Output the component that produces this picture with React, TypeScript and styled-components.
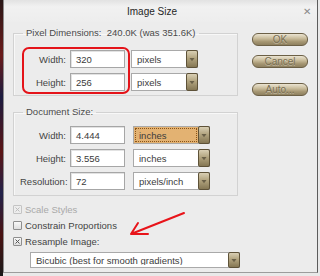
import { Fragment } from 'react';
import styled, { createGlobalStyle } from 'styled-components';

const GlobalStyle = createGlobalStyle`
  html, body {
    margin: 0;
    padding: 0;
    background: #e4e4e4;
  }
  * {
    box-sizing: border-box;
  }
`;

const Screen = styled.div({
  position: 'relative',
  display: 'flex',
  width: 320,
  height: 276,
  overflow: 'hidden',
  background: '#e9e9e9',
  fontFamily: '"Liberation Sans", Arial, sans-serif',
  fontSize: 9.5,
  color: '#444',
});

const Backdrop = styled.div({
  width: 3,
  flexShrink: 0,
  background:
    'linear-gradient(180deg, #2a1818 0%, #6a1a1a 20%, #1c1c40 35%, #5a1414 55%, #22224a 70%, #4a1212 85%, #1a1a1a 100%)',
});

const Window = styled.div({
  display: 'flex',
  flexDirection: 'column',
  width: 315,
  height: 273,
  flexShrink: 0,
  borderLeft: '1px solid #8c8c8c',
  borderRight: '1px solid #5c5c5c',
  borderBottom: '1px solid #9c9c9c',
  background: '#ececec',
});

const TitleBar = styled.div({
  display: 'flex',
  alignItems: 'center',
  justifyContent: 'space-between',
  height: 22,
  paddingLeft: 123,
  paddingRight: 6,
  background: 'linear-gradient(180deg, #e2e2e2 0%, #f1f1f1 30%, #ededed 100%)',
});

const Title = styled.span({
  fontSize: 10,
  color: '#262626',
});

const CloseGlyph = styled.span({
  fontSize: 10,
  color: '#8a8a8a',
});

const Body = styled.div({
  display: 'flex',
  gap: 14,
  padding: '0 9px',
});

const LeftColumn = styled.div({
  display: 'flex',
  flexDirection: 'column',
  width: 225,
});

const RightColumn = styled.div({
  display: 'flex',
  flexDirection: 'column',
  width: 56,
  paddingTop: 11,
});

const Group = styled.fieldset<{ $top: number; $padBottom: number }>((props) => ({
  margin: `${props.$top}px 0 0 0`,
  padding: `8px 0 ${props.$padBottom}px 0`,
  minWidth: 0,
  border: '1px solid #d2d2d2',
  boxShadow: 'inset 1px 1px 0 #f8f8f8',
}));

const GroupTitle = styled.legend({
  marginLeft: 9,
  padding: '0 3px',
  lineHeight: '12px',
  fontSize: 9.5,
  color: '#4a4a4a',
});

const PixelRow = styled.div({
  display: 'flex',
  alignItems: 'flex-start',
  paddingLeft: 8,
});

const Highlight = styled.div({
  display: 'flex',
  flexDirection: 'column',
  gap: 5,
  width: 108,
  padding: '1px 3px 1px 0',
  border: '2px solid #e4141a',
  borderRadius: 7,
});

const FieldLine = styled.div({
  display: 'flex',
  alignItems: 'center',
  gap: 4,
  height: 18,
});

const UnitStack = styled.div({
  display: 'flex',
  flexDirection: 'column',
  gap: 5,
  marginTop: 3,
  marginLeft: 1,
});

const DocGrid = styled.div({
  display: 'grid',
  gridTemplateColumns: '46px 55px 77px',
  gridAutoRows: 18,
  columnGap: 4,
  rowGap: 5,
  paddingLeft: 6,
  alignItems: 'center',
  '& > :nth-child(3n)': {
    marginLeft: 4,
  },
});

const FieldLabel = styled.span<{ $width?: number }>((props) => ({
  width: props.$width,
  textAlign: 'right',
  whiteSpace: 'nowrap',
  color: '#444',
}));

const TextBox = styled.div({
  display: 'flex',
  alignItems: 'center',
  width: 55,
  height: 18,
  paddingLeft: 5,
  background: '#fff',
  border: '1px solid #a6a6a6',
  boxShadow: 'inset 1px 1px 0 #e2e2e2',
  color: '#3a3a3a',
});

const SelectBox = styled.div<{ $width: number; $height?: number; $focused?: boolean }>((props) => ({
  display: 'flex',
  alignItems: 'stretch',
  width: props.$width,
  height: props.$height ?? 18,
  background: props.$focused ? '#e3b272' : '#fff',
  border: '1px solid #a9a9a9',
  color: '#3c3c3c',
}));

const SelectText = styled.span<{ $focused?: boolean }>((props) => ({
  display: 'flex',
  alignItems: 'center',
  flex: 1,
  paddingLeft: 3,
  margin: 1,
  border: props.$focused ? '1px dotted #8a5418' : '1px solid transparent',
  whiteSpace: 'nowrap',
  overflow: 'hidden',
}));

const DropButton = styled.span({
  display: 'flex',
  alignItems: 'center',
  justifyContent: 'center',
  width: 12,
  margin: '-1px -1px -1px 0',
  borderRadius: 2,
  border: '1px solid #5e5238',
  background: 'linear-gradient(180deg, #d9cfb4 0%, #b2a47f 45%, #857754 100%)',
});

const DialogButton = styled.div<{ $gap: number }>((props) => ({
  display: 'flex',
  alignItems: 'center',
  justifyContent: 'center',
  height: 13,
  marginTop: props.$gap,
  borderRadius: 6,
  border: '1px solid #6c6046',
  background: 'linear-gradient(180deg, #ebe4d2 0%, #c9bc9b 40%, #a59672 70%, #8e8060 100%)',
  fontSize: 10,
  color: '#786d52',
  textShadow: '0 1px 0 rgba(255,255,255,0.35)',
}));

const Options = styled.div({
  display: 'flex',
  flexDirection: 'column',
  marginTop: 5,
});

const OptionRow = styled.div<{ $disabled?: boolean }>((props) => ({
  display: 'flex',
  alignItems: 'center',
  gap: 3,
  height: 16,
  color: props.$disabled ? '#a9a9a9' : '#444',
}));

const Box = styled.span<{ $disabled?: boolean }>((props) => ({
  display: 'flex',
  alignItems: 'center',
  justifyContent: 'center',
  width: 9,
  height: 9,
  border: `1px solid ${props.$disabled ? '#c4c4c4' : '#8e8e8e'}`,
  borderRadius: 1,
  background: props.$disabled ? '#ededed' : 'linear-gradient(180deg, #f8f8f8, #dedede)',
}));

const ResampleSelect = styled.div({
  marginTop: 3,
  marginLeft: 17,
});

const Arrow = styled.svg({
  position: 'absolute',
  left: 128,
  top: 210,
  pointerEvents: 'none',
});

function Caret() {
  return (
    <svg width="6" height="5" viewBox="0 0 6 5">
      <polygon points="0.5,1 5.5,1 3,4.2" fill="#6a6048" />
    </svg>
  );
}

interface SelectProps {
  value: string;
  width: number;
  height?: number;
  focused?: boolean;
}

function Select({ value, width, height, focused }: SelectProps) {
  return (
    <SelectBox $width={width} $height={height} $focused={focused}>
      <SelectText $focused={focused}>{value}</SelectText>
      <DropButton>
        <Caret />
      </DropButton>
    </SelectBox>
  );
}

interface CheckProps {
  label: string;
  checked?: boolean;
  disabled?: boolean;
}

function Check({ label, checked, disabled }: CheckProps) {
  return (
    <OptionRow $disabled={disabled}>
      <Box $disabled={disabled}>
        {checked && (
          <svg width="5" height="5" viewBox="0 0 5 5">
            <path d="M0.5 0.5 L4.5 4.5 M4.5 0.5 L0.5 4.5" stroke={disabled ? '#bdbdbd' : '#555'} strokeWidth="1" />
          </svg>
        )}
      </Box>
      <span>{label}</span>
    </OptionRow>
  );
}

const docRows = [
  { label: 'Width:', value: '4.444', unit: 'inches', focused: true },
  { label: 'Height:', value: '3.556', unit: 'inches', focused: false },
  { label: 'Resolution:', value: '72', unit: 'pixels/inch', focused: false },
];

export default function App() {
  return (
    <>
      <GlobalStyle />
      <Screen>
        <Backdrop />
        <Window>
          <TitleBar>
            <Title>Image Size</Title>
            <CloseGlyph>✕</CloseGlyph>
          </TitleBar>
          <Body>
            <LeftColumn>
              <Group $top={5} $padBottom={1}>
                <GroupTitle>Pixel Dimensions:&nbsp; 240.0K (was 351.6K)</GroupTitle>
                <PixelRow>
                  <Highlight>
                    <FieldLine>
                      <FieldLabel $width={42}>Width:</FieldLabel>
                      <TextBox>320</TextBox>
                    </FieldLine>
                    <FieldLine>
                      <FieldLabel $width={42}>Height:</FieldLabel>
                      <TextBox>256</TextBox>
                    </FieldLine>
                  </Highlight>
                  <UnitStack>
                    <Select value="pixels" width={67} />
                    <Select value="pixels" width={67} />
                  </UnitStack>
                </PixelRow>
              </Group>
              <Group $top={10} $padBottom={5}>
                <GroupTitle>Document Size:</GroupTitle>
                <DocGrid>
                  {docRows.map((row) => (
                    <Fragment key={row.label}>
                      <FieldLabel>{row.label}</FieldLabel>
                      <TextBox>{row.value}</TextBox>
                      <Select value={row.unit} width={77} focused={row.focused} />
                    </Fragment>
                  ))}
                </DocGrid>
              </Group>
              <Options>
                <Check label="Scale Styles" checked disabled />
                <Check label="Constrain Proportions" />
                <Check label="Resample Image:" checked />
              </Options>
              <ResampleSelect>
                <Select value="Bicubic (best for smooth gradients)" width={210} height={16} />
              </ResampleSelect>
            </LeftColumn>
            <RightColumn>
              <DialogButton $gap={0}>OK</DialogButton>
              <DialogButton $gap={9}>Cancel</DialogButton>
              <DialogButton $gap={15}>Auto...</DialogButton>
            </RightColumn>
          </Body>
        </Window>
        <Arrow width="60" height="28" viewBox="0 0 60 28">
          <path d="M56 3 L3 24 M3 24 L10 13 M3 24 L20 24" stroke="#e8141a" strokeWidth="2" fill="none" strokeLinecap="round" />
        </Arrow>
      </Screen>
    </>
  );
}
